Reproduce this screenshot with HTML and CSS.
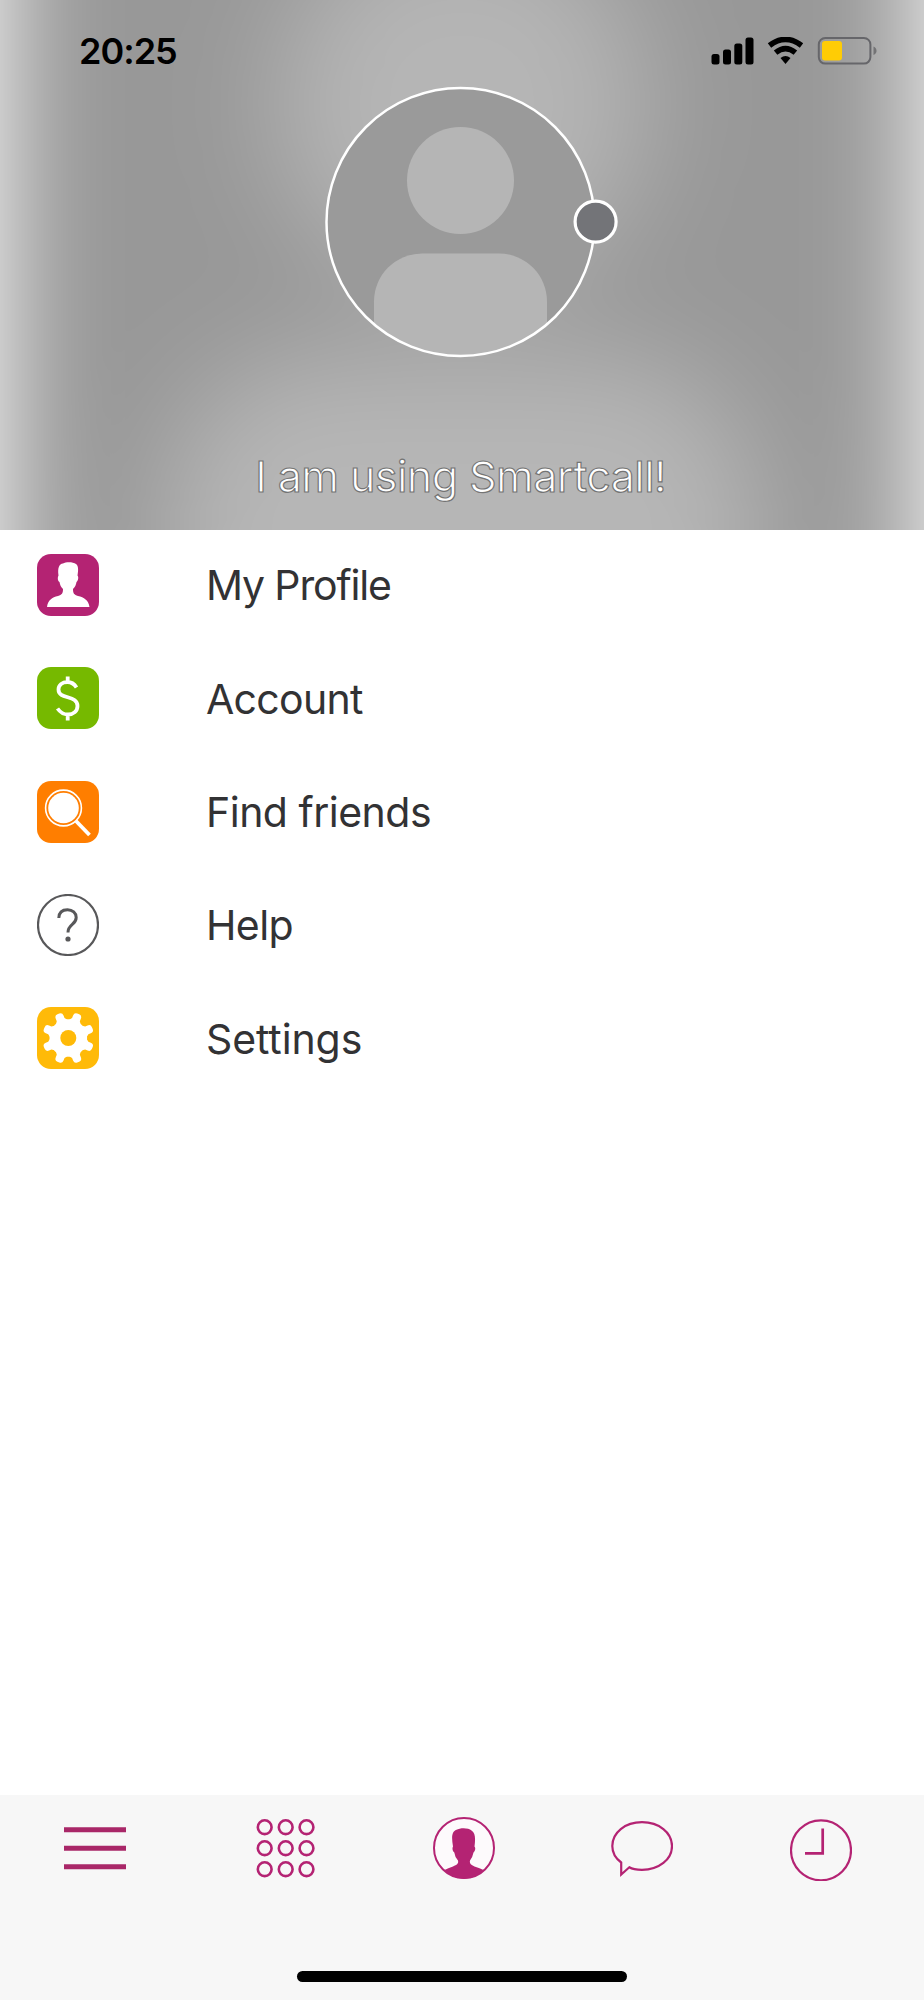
FILE: index.html
```html
<!DOCTYPE html>
<html lang="en">
<head>
<meta charset="utf-8">
<title>Smartcall</title>
<link rel="stylesheet" href="styles.css">
</head>
<body>
<div class="screen">
  <header class="hero">
    <svg class="backdrop" viewBox="0 0 924 530" preserveAspectRatio="none" aria-hidden="true">
      <defs><filter id="soft" filterUnits="userSpaceOnUse" x="-250" y="-300" width="1424" height="1130" color-interpolation-filters="sRGB"><feGaussianBlur stdDeviation="56"/></filter></defs>
      <g filter="url(#soft)">
        <rect x="-250" y="-300" width="1424" height="1130" fill="#fff"/>
        <rect x="0" y="-300" width="924" height="1130" fill="#989898"/>
        <circle cx="462" cy="103" r="186" fill="#b5b5b5"/>
        <rect x="163" y="355" width="598" height="600" rx="165" fill="#b6b6b6"/>
      </g>
    </svg>
    <div class="statusbar">
      <span class="time">20:25</span>
      <svg class="signals" width="168" height="28" viewBox="0 0 168 28">
        <rect x="0.5" y="17" width="8" height="10.5" rx="2.5"/><rect x="12" y="12.5" width="8" height="15" rx="2.5"/><rect x="23.3" y="6.5" width="8" height="21" rx="2.5"/><rect x="34.5" y="0.5" width="8" height="27" rx="2.5"/>
        <g fill="none" stroke="#000" stroke-width="5.6"><path d="M58.5 8.5Q74.5 -3.6 90.5 8.5"/><path d="M64.6 15.6Q74.5 7.6 84.4 15.6"/></g>
        <path d="M69.5 21Q74.5 17.2 79.5 21L74.5 27Z"/>
        <rect x="107.8" y="1" width="51.6" height="25.6" rx="6.5" fill="none" stroke="#66666a" stroke-width="2"/>
        <rect x="111" y="4" width="20" height="19.5" rx="3" fill="#ffcc05"/>
        <path d="M162.5 9.5Q165.5 10.8 165.5 13.8T162.5 18Z" fill="#737375"/>
      </svg>
    </div>
    <div class="avatar">
      <svg width="294" height="272" viewBox="0 0 294 272">
        <defs><clipPath id="round"><circle cx="135.5" cy="136" r="134"/></clipPath></defs>
        <g clip-path="url(#round)"><rect width="272" height="272" fill="#9a9a9a"/><circle cx="135.5" cy="94.5" r="53.5" fill="#b5b5b5"/><rect x="49" y="167.5" width="173" height="130" rx="48" fill="#b5b5b5"/></g>
        <circle cx="135.5" cy="136" r="134" fill="none" stroke="#fff" stroke-width="2.5"/>
        <circle cx="270.6" cy="135.7" r="20.5" fill="#737478" stroke="#fff" stroke-width="3.2"/>
      </svg>
    </div>
    <p class="motto">I am using Smartcall!</p>
  </header>

  <ul class="menu">
    <li class="item">
      <svg class="icon" viewBox="0 0 62 62"><rect width="62" height="62" rx="14" fill="#b42373"/><path fill="#fff" d="M10 53C11 46 15 43.5 21 42C25 40.5 26 39.5 26 35C24 33 23 31 22.5 28C20.5 27 20.5 23 21.5 21.5C20.5 14 22 10 26 9.5C29 7.8 36 7.8 39 10C41.5 12 41.5 16 40.5 21.5C42 23 41 27 39.5 28C39 31 38 33 36 35C36 39.5 37 40.5 41 42C47 43.5 51.5 46 52.5 53Z"/></svg>
      <span class="label profile">My Profile</span>
    </li>
    <li class="item">
      <svg class="icon" viewBox="0 0 62 62"><rect width="62" height="62" rx="14" fill="#76b900"/><path fill="none" stroke="#fff" stroke-width="3.8" d="M39.5 20.5C37 16.5 34 15 30.5 15C25 15 21.5 18.2 21.5 22.5C21.5 33 40.5 27.5 40.5 39C40.5 44 36.5 47.5 31 47.5C26 47.5 23 45 20.5 41.5M30.7 9.5V15M30.7 47.5V53.5"/></svg>
      <span class="label account">Account</span>
    </li>
    <li class="item">
      <svg class="icon" viewBox="0 0 62 62"><rect width="62" height="62" rx="14" fill="#ff7e00"/><circle cx="26.5" cy="27" r="15.3" fill="#fff"/><circle cx="26.5" cy="27" r="17.9" fill="none" stroke="#fff" stroke-width="1.6"/><path d="M39 40L52.5 54" stroke="#fff" stroke-width="3.8"/></svg>
      <span class="label find">Find friends</span>
    </li>
    <li class="item">
      <svg class="icon" viewBox="0 0 62 62"><circle cx="31" cy="31" r="30" fill="none" stroke="#58585a" stroke-width="2.2"/><path fill="none" stroke="#58585a" stroke-width="3" d="M21.8 24C22 18.5 25.5 15.8 30.5 15.8C35.5 15.8 39.2 19 39.2 23.5C39.2 31 31 30 31 38.5"/><circle cx="31" cy="45" r="2.6" fill="#58585a"/></svg>
      <span class="label help">Help</span>
    </li>
    <li class="item">
      <svg class="icon" viewBox="0 0 62 62"><rect width="62" height="62" rx="14" fill="#ffba08"/>
        <g transform="translate(31.3 31)" fill="#fff"><circle r="18.8"/><g id="teeth"><path id="tooth" transform="rotate(22.5)" d="M-6.8 -16.5L-4.2 -20V-22.6Q-4.2 -26 -1 -26H1Q4.2 -26 4.2 -22.6V-20L6.8 -16.5Z"/><use href="#tooth" transform="rotate(45)"/><use href="#tooth" transform="rotate(90)"/><use href="#tooth" transform="rotate(135)"/></g><use href="#teeth" transform="rotate(180)"/><circle r="8" fill="#ffba08"/></g></svg>
      <span class="label settings">Settings</span>
    </li>
  </ul>

  <nav class="tabs">
    <div class="tabrow">
      <svg class="tab lines" viewBox="0 0 62 64"><path d="M0 12.7H62M0 31.2H62M0 49.8H62" stroke-width="5"/></svg>
      <svg class="tab" viewBox="0 0 62 64"><g stroke-width="2.6"><circle cx="9.7" cy="10.2" r="6.9"/><circle cx="30.7" cy="10.2" r="6.9"/><circle cx="51.5" cy="10.2" r="6.9"/><circle cx="9.7" cy="31.2" r="6.9"/><circle cx="30.7" cy="31.2" r="6.9"/><circle cx="51.5" cy="31.2" r="6.9"/><circle cx="9.7" cy="52.2" r="6.9"/><circle cx="30.7" cy="52.2" r="6.9"/><circle cx="51.5" cy="52.2" r="6.9"/></g></svg>
      <svg class="tab" viewBox="0 0 62 64"><circle cx="31" cy="31" r="30" fill="#fdfafc" stroke-width="2"/><path class="solid" d="M11.5 53Q15 51 20 49.5C25 47.5 25.5 46 25 43.5Q22 40.5 21.3 35.5C19.5 34.5 19 31 20 29.5C18.5 21 18.5 14.5 23.5 12.8C27 10.5 35.5 10.5 38.5 13.5C42.5 16 42.5 22 41.5 29.5C43 31 42 34.5 40.5 35.5Q39.5 40.5 37 43.5C36.5 46 37 47.5 41.5 49.5Q47 51 50.5 53C40 64.5 22 64.5 11.5 53Z"/></svg>
      <svg class="tab" viewBox="0 0 62 64"><path stroke-width="2.2" d="M10.2 45.5V57.5L18.3 50.3C21 52 26.5 52.8 31 52.8C48 52.8 61 42.5 61 29S48 5.2 31 5.2S1.3 15.5 1.3 29C1.3 36 5.5 42 10.2 45.5Z"/></svg>
      <svg class="tab" viewBox="0 0 62 64"><circle cx="31" cy="33.3" r="30" stroke-width="2.2"/><path stroke-width="2.7" d="M32.7 11.5V36.3H15"/></svg>
    </div>
    <div class="home"></div>
  </nav>
</div>
</body>
</html>
```

FILE: styles.css
```css
* { box-sizing: border-box; }
body { margin: 0; background: #fff; font-family: Inter, "Liberation Sans", sans-serif; }
.screen { width: 924px; height: 2000px; display: flex; flex-direction: column; overflow: hidden; }

.hero { position: relative; isolation: isolate; height: 529.5px; flex: none; overflow: hidden; display: flex; flex-direction: column; }
.backdrop { position: absolute; inset: 0; z-index: -1; width: 100%; height: 100%; }
.statusbar { height: 86px; padding: 36.5px 45px 0 79px; display: flex; justify-content: space-between; align-items: flex-start; }
.time { font-size: 36px; line-height: 29px; font-weight: 600; letter-spacing: -1px; white-space: nowrap; }
.signals { flex: none; }
.avatar { padding-left: 325px; height: 272px; }
.avatar svg { display: block; }
.motto { margin: 93px 0 0; padding-right: 3px; text-align: center; font-size: 43px; line-height: 50px; font-weight: 400; letter-spacing: -0.55px; color: #fff; -webkit-text-stroke: 1.2px #747474; white-space: nowrap; }

.menu { list-style: none; margin: -1.2px 0 0; padding: 0 37px; flex: 1; }
.item { height: 113.3px; display: flex; align-items: center; gap: 107px; }
.icon { width: 62px; height: 62px; flex: none; }
.label { padding-top: 1px; font-size: 41px; line-height: 48px; font-weight: 400; color: #323234; white-space: nowrap; }
.profile { letter-spacing: -1.15px; }
.account { letter-spacing: -0.7px; }
.find { letter-spacing: -0.5px; }
.help { letter-spacing: -0.6px; }
.settings { letter-spacing: -0.1px; }

.tabs { height: 205px; flex: none; background: #f7f7f7; display: flex; flex-direction: column; justify-content: space-between; align-items: center; padding: 22px 0 18.5px; }
.tabrow { align-self: stretch; display: flex; gap: 116.3px; padding-left: 64px; }
.tab { width: 62px; height: 64px; flex: none; fill: none; stroke: #b42373; }
.lines { margin-right: 12.5px; stroke: #a92768; }
.solid { fill: #b42373; stroke: none; }
.home { width: 330px; height: 11px; border-radius: 6px; background: #000; }
```
